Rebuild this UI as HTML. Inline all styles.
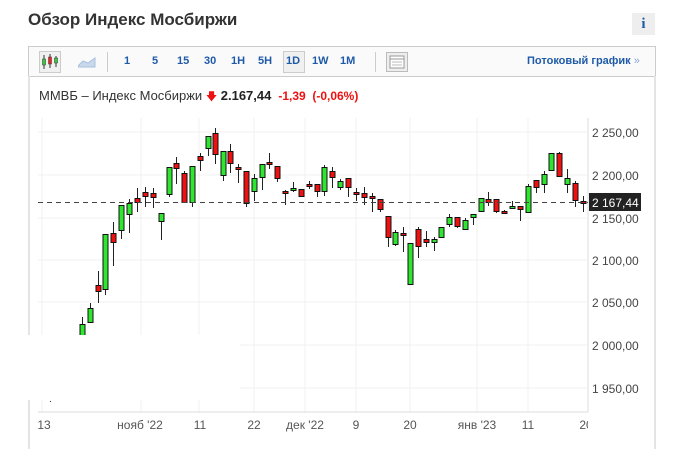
<!DOCTYPE html>
<html><head><meta charset="utf-8"><style>
body{margin:0;width:675px;height:449px;background:#fff;font-family:"Liberation Sans",Arial,sans-serif;position:relative;overflow:hidden}
.t{position:absolute;left:28px;top:10px;font-size:17px;font-weight:bold;color:#333}
.info{position:absolute;left:632px;top:13px;width:23px;height:22px;background:#eee;color:#1f5aa8;font:bold 15px "Liberation Serif",serif;text-align:center;line-height:22px}
.tb{position:absolute;left:28px;top:46px;width:626px;height:29px;border:1px solid #ccc;background:#fafafa}
.tb span{position:absolute;top:8px;font-size:11px;font-weight:bold;color:#1f5aa8}
.lb{position:absolute;left:28px;top:76px;width:2px;height:373px;background:#e4e4e4}
.rb{position:absolute;left:654px;top:76px;width:2px;height:373px;background:#e4e4e4}
.lg{position:absolute;left:39px;top:88px;font-size:13px;color:#333;white-space:nowrap}
</style></head><body>
<div class="t">Обзор Индекс Мосбиржи</div>
<div class="info">i</div>
<div class="tb">
<div style="position:absolute;left:10px;top:4px;width:20px;height:20px;border:1px solid #ccc;background:#f0f0f0"></div>
<svg style="position:absolute;left:12px;top:6px" width="18" height="18"><g stroke="#333" stroke-width="1"><line x1="3" y1="2" x2="3" y2="16"/><line x1="9" y1="1" x2="9" y2="15"/><line x1="15" y1="3" x2="15" y2="14"/></g><rect x="1.5" y="6" width="3" height="6" fill="#3c3" stroke="#333" stroke-width=".5"/><rect x="7.5" y="4" width="3" height="7" fill="#e22" stroke="#333" stroke-width=".5"/><rect x="13.5" y="5" width="3" height="5" fill="#3c3" stroke="#333" stroke-width=".5"/></svg>
<svg style="position:absolute;left:49px;top:9px" width="18" height="12"><path d="M0 10 L5 5 L10 7 L17 2 L17 11 L0 11Z" fill="#c8d9ec" stroke="#a8c0dc"/></svg>
<div style="position:absolute;left:78px;top:5px;width:1px;height:20px;background:#ccc"></div>
<span style="left:95px">1</span><span style="left:123px">5</span><span style="left:148px">15</span><span style="left:175px">30</span><span style="left:202px">1H</span><span style="left:229px">5H</span>
<div style="position:absolute;left:254px;top:4px;width:20px;height:20px;border:1px solid #ccc;background:#f0f0f0"></div>
<span style="left:257px">1D</span><span style="left:283px">1W</span><span style="left:311px">1M</span>
<div style="position:absolute;left:346px;top:5px;width:1px;height:20px;background:#ccc"></div>
<svg style="position:absolute;left:357px;top:5px" width="22" height="20"><rect x=".5" y=".5" width="21" height="19" fill="#eee" stroke="#bbb"/><rect x="4" y="4" width="14" height="12" fill="#fff" stroke="#999"/><line x1="4" y1="7" x2="18" y2="7" stroke="#999"/><line x1="6" y1="10" x2="16" y2="10" stroke="#bbb"/><line x1="6" y1="13" x2="16" y2="13" stroke="#bbb"/></svg>
<span style="left:498px">Потоковый график <span style="position:static;color:#8aa8d0;font-weight:normal">»</span></span>
</div>
<div class="lb"></div><div class="rb"></div>
<div class="lg">ММВБ – Индекс Мосбиржи <span style="color:#e11;font-size:11px">&#129095;</span> <b style="color:#222">2.167,44</b> <b style="color:#e11;font-size:12px">&nbsp;-1,39 &nbsp;(-0,06%)</b></div>
<svg id="c" style="position:absolute;left:0;top:0" width="675" height="449" font-family="Liberation Sans,Arial,sans-serif">
<defs><clipPath id="cp"><rect x="30" y="100" width="558" height="349"/></clipPath></defs>
<g stroke="#f0f0f0" stroke-width="1">
<line x1="38" y1="132" x2="587" y2="132"/><line x1="38" y1="175" x2="587" y2="175"/><line x1="38" y1="218" x2="587" y2="218"/><line x1="38" y1="260" x2="587" y2="260"/><line x1="38" y1="302" x2="587" y2="302"/><line x1="38" y1="345" x2="587" y2="345"/><line x1="38" y1="388" x2="587" y2="388"/>
<line x1="42" y1="118" x2="42" y2="412"/><line x1="141" y1="118" x2="141" y2="412"/><line x1="199" y1="118" x2="199" y2="412"/><line x1="254" y1="118" x2="254" y2="412"/><line x1="305" y1="118" x2="305" y2="412"/><line x1="356" y1="118" x2="356" y2="412"/><line x1="410" y1="118" x2="410" y2="412"/><line x1="477" y1="118" x2="477" y2="412"/><line x1="528" y1="118" x2="528" y2="412"/>
</g>
<line x1="38" y1="412" x2="588" y2="412" stroke="#ddd"/>
<line x1="588" y1="118" x2="588" y2="412" stroke="#ddd"/>
<g id="k" stroke="#222" stroke-width="1"></g>
<line x1="38" y1="202.5" x2="588" y2="202.5" stroke="#444" stroke-dasharray="5,4"/>
<g font-size="12" fill="#444">
<text x="592" y="137">2 250,00</text><text x="592" y="180">2 200,00</text><text x="592" y="223">2 150,00</text><text x="592" y="265">2 100,00</text><text x="592" y="307">2 050,00</text><text x="592" y="350">2 000,00</text><text x="592" y="393">1 950,00</text>
</g>
<rect x="589" y="193" width="52" height="18" fill="#222"/>
<text x="592" y="207" font-size="12" fill="#fff">2 167,44</text>
<g font-size="12" fill="#555" text-anchor="middle" clip-path="url(#cp)">
<text x="44" y="429">13</text><text x="140" y="429">нояб '22</text><text x="200" y="429">11</text><text x="254" y="429">22</text><text x="305" y="429">дек '22</text><text x="356" y="429">9</text><text x="410" y="429">20</text><text x="477" y="429">янв '23</text><text x="528" y="429">11</text><text x="586" y="429">20</text>
</g>
<rect x="28" y="335" width="212" height="65" fill="#fff"/>
<rect x="50" y="401" width="1" height="1" fill="#333"/>
</svg>
<script>
var d=[[82,'g',324,335,317,335],[90,'g',308,322,303,322],[98,'r',285,291,271,303],[105,'g',234,289,234,295],[113,'r',233,242,222,266],[121,'g',205,230,205,239],[129,'g',203,214,199,233],[137,'r',198,202,188,212],[145,'r',192,196,187,207],[153,'r',193,197,188,208],[161,'g',213,221,213,240],[169,'g',167,194,167,197],[176,'r',163,168,157,184],[184,'r',173,202,171,202],[192,'g',166,202,166,207],[200,'r',156,160,153,171],[208,'g',136,148,136,156],[215,'r',133,154,128,164],[223,'g',151,175,151,181],[230,'r',151,163,144,173],[238,'r',167,169,164,183],[246,'r',171,203,171,207],[254,'g',178,191,174,201],[262,'g',164,177,164,190],[269,'r',162,164,153,169],[277,'r',166,178,166,182],[285,'r',191,193,190,205],[293,'g',188,190,182,192],[301,'r',189,196,189,197],[309,'r',184,186,181,189],[317,'r',184,191,184,197],[324,'g',167,191,165,196],[332,'r',171,177,167,188],[340,'g',181,187,179,190],[348,'r',178,187,178,197],[356,'r',192,194,188,201],[364,'r',193,197,187,205],[372,'r',196,198,193,212],[380,'r',199,209,199,212],[388,'r',216,237,216,247],[395,'g',232,244,230,246],[403,'r',233,235,227,252],[410,'g',243,284,243,284],[418,'r',229,246,227,258],[426,'r',239,242,231,247],[434,'g',239,242,237,251],[441,'g',227,237,227,237],[449,'g',217,224,214,227],[457,'r',217,226,217,228],[465,'g',220,229,218,229],[473,'g',214,217,214,225],[481,'g',198,211,198,211],[488,'r',199,202,192,206],[496,'r',199,211,199,213],[504,'r',211,213,210,214],[512,'g',206,208,201,208],[520,'r',206,209,206,221],[528,'g',186,212,184,212],[536,'r',180,187,180,193],[544,'g',174,184,171,193],[551,'g',153,170,153,170],[559,'r',153,176,152,176],[567,'g',178,184,169,193],[575,'r',183,200,181,207],[583,'r',201,203,196,212]];
var s='';d.forEach(function(c){var x=c[0];s+='<line x1="'+(x+.5)+'" y1="'+c[4]+'" x2="'+(x+.5)+'" y2="'+c[5]+'"/>';s+='<rect x="'+(x-2)+'" y="'+(c[2]+.5)+'" width="5" height="'+Math.max(2,c[3]-c[2])+'" fill="'+(c[1]=='g'?'#2ee62e':'#ee1111')+'" stroke="#111"/>';});
document.getElementById('k').innerHTML=s;
</script>
</body></html>
